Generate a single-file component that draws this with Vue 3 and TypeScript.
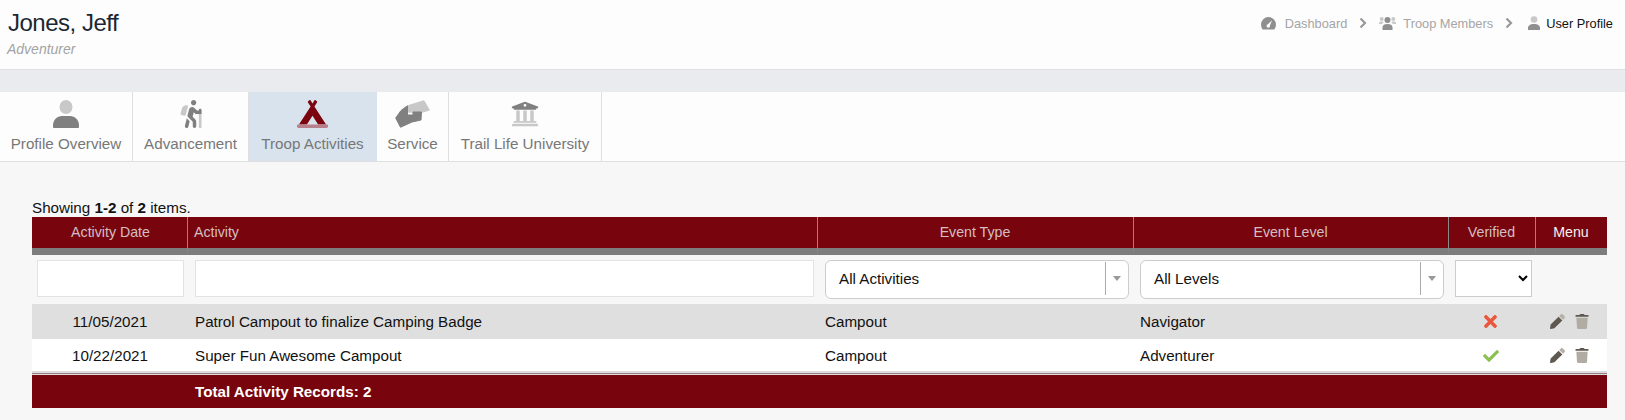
<script setup lang="ts">
interface Row {
  date: string
  activity: string
  type: string
  level: string
  verified: boolean
}
const tabs = ['Profile Overview', 'Advancement', 'Troop Activities', 'Service', 'Trail Life University']
const rows: Row[] = [
  { date: '11/05/2021', activity: 'Patrol Campout to finalize Camping Badge', type: 'Campout', level: 'Navigator', verified: false },
  { date: '10/22/2021', activity: 'Super Fun Awesome Campout', type: 'Campout', level: 'Adventurer', verified: true },
]
</script>

<template>
  <div class="page">
    <header class="top">
      <div>
        <h1 class="name">Jones, Jeff</h1>
        <div class="role">Adventurer</div>
      </div>
      <nav class="crumbs">
        <svg class="c-gauge" viewBox="0 0 16 14"><path fill="#8f8f8f" d="M8 0a8 8 0 0 0-8 8c0 2 .6 3.900 1.700 5.400h12.600A8 8 0 0 0 16 8a8 8 0 0 0-8-8z"/><path fill="#fdfdfd" d="M11.900 3.600 7.300 7.900a1.800 1.800 0 1 0 2.200 1.300z"/></svg>
        <span class="c-muted">Dashboard</span>
        <svg class="c-chev" viewBox="0 0 8 12"><path fill="none" stroke="#999" stroke-width="2.200" d="M1.500 1.500 6 6l-4.500 4.500"/></svg>
        <svg class="c-users" viewBox="0 0 17 14"><circle cx="8.500" cy="4" r="3" fill="#8f8f8f"/><path fill="#8f8f8f" d="M3.500 14v-2.500C3.500 9 5.500 8 8.500 8s5 1 5 3.500V14z"/><circle cx="2.700" cy="3" r="2" fill="#c8c8c8"/><circle cx="14.300" cy="3" r="2" fill="#c8c8c8"/><path fill="#c8c8c8" d="M0 8V7c0-1 1-1.500 2.700-1.500 1 0 1.500.2 2.100.5L3 8zM17 8V7c0-1-1-1.500-2.700-1.500-1 0-1.500.2-2.100.5L14 8z"/></svg>
        <span class="c-muted">Troop Members</span>
        <svg class="c-chev c-chev2" viewBox="0 0 8 12"><path fill="none" stroke="#999" stroke-width="2.200" d="M1.500 1.500 6 6l-4.500 4.500"/></svg>
        <svg class="c-user" viewBox="0 0 12 14"><circle cx="6" cy="3.500" r="3.300" fill="#c8c8c8"/><path fill="#8f8f8f" d="M0 14v-2c0-2.500 2.500-4 6-4s6 1.500 6 4v2z"/></svg>
        <span class="c-here">User Profile</span>
      </nav>
    </header>

    <div class="band"></div>

    <div class="tabs">
      <div v-for="(t, i) in tabs" :key="t" class="tab" :class="{ active: i === 2 }">
        <svg v-if="i === 0" class="ico" viewBox="0 0 26 28"><ellipse cx="13" cy="7" rx="6.500" ry="7" fill="#c8c8c8"/><path fill="#808080" d="M1 28c-.5 0-1-.5-1-1v-1.500C0 20 4 16 9 16h8c5 0 9 4 9 9.500V27c0 .5-.5 1-1 1z"/></svg>
        <svg v-else-if="i === 1" class="ico" viewBox="0 0 384 512"><path fill="#c8c8c8" d="M95.840 276.110 137 117c2.190-8.420-3.140-16.950-11.920-19.060-43.880-10.520-88.350 15.070-99.320 57.170L.49 253.240c-2.190 8.420 3.140 16.950 11.920 19.060l63.560 15.250c8.790 2.100 17.680-3.020 19.870-11.440zM336 192v304c0 8.840 7.160 16 16 16h16c8.840 0 16-7.160 16-16V192z"/><path fill="#808080" d="M80.950 472.230c-4.280 17.160 6.140 34.530 23.280 38.810 2.610.66 5.220.97 7.800.97 14.330 0 27.370-9.700 31.020-24.230l25.240-100.970-52.780-52.780-34.560 138.200zM368 160h-16c-8.840 0-16 7.160-16 16v16h-34.750l-46.780-46.780C243.380 134.110 228.610 128 212.910 128c-27.020 0-50.470 18.300-57.030 44.520l-26.920 107.720a32.012 32.012 0 0 0 8.420 30.390L224 397.250V480c0 17.670 14.330 32 32 32s32-14.330 32-32v-82.750c0-17.090-6.660-33.160-18.750-45.250l-46.820-46.820c.15-.5.49-.89.62-1.410l19.890-79.570 22.430 22.430c6 6 14.140 9.380 22.620 9.380H384v-80c0-8.840-7.160-16-16-16zM240 96c26.510 0 48-21.490 48-48S266.510 0 240 0s-48 21.490-48 48 21.490 48 48 48z"/></svg>
        <svg v-else-if="i === 2" class="ico" viewBox="0 0 640 512" preserveAspectRatio="none"><path fill="#7a050e" d="M599.320 448 359.540 117.750l53.410-73.550c5.190-7.150 3.610-17.160-3.540-22.350l-25.900-18.790c-7.150-5.190-17.150-3.610-22.350 3.550L320 63.300 278.830 6.600c-5.190-7.150-15.200-8.740-22.350-3.550l-25.880 18.800c-7.150 5.190-8.740 15.200-3.540 22.350l53.410 73.550L40.680 448h162.960L320 288l116.360 160z"/><path fill="#b7808a" d="M16 448h608c8.840 0 16 7.160 16 16v16c0 17.700-14.300 32-32 32H32c-17.700 0-32-14.300-32-32v-16c0-8.840 7.160-16 16-16z"/></svg>
        <svg v-else-if="i === 3" class="ico ico-hand" viewBox="0 0 35 28"><path fill="#c8c8c8" stroke="#c8c8c8" stroke-linejoin="round" d="M13.500 5.500 29 .7l5.300 9.500-7.300 2H13.500z"/><path fill="#808080" stroke="#808080" stroke-linejoin="round" d="M.7 18 6 10.500l6.500-4.800V15H18v-3h8.500L26 20l-9 2-11.500 5.300z"/></svg>
        <svg v-else class="ico" viewBox="0 0 512 512"><path fill="#808080" fill-rule="evenodd" d="M496 128v16a8 8 0 0 1-8 8h-24v12c0 6.627-5.373 12-12 12H60c-6.627 0-12-5.373-12-12v-12H24a8 8 0 0 1-8-8v-16a8 8 0 0 1 4.941-7.392l232-88a7.996 7.996 0 0 1 6.118 0l232 88A8 8 0 0 1 496 128zM256 72a26 26 0 1 0 0 52 26 26 0 0 0 0-52z"/><path fill="#c8c8c8" d="M472 432H40c-13.255 0-24 10.745-24 24v16a8 8 0 0 0 8 8h464a8 8 0 0 0 8-8v-16c0-13.255-10.745-24-24-24zM96 192v192H60c-6.627 0-12 5.373-12 12v20h416v-20c0-6.627-5.373-12-12-12h-36V192h-64v192h-64V192h-64v192h-64V192H96z"/></svg>
        <span class="tab-label">{{ t }}</span>
      </div>
    </div>

    <main class="content">
      <div class="summary">Showing <b>1-2</b> of <b>2</b> items.</div>
      <table class="grid">
        <colgroup>
          <col class="c1" /><col class="c2" /><col class="c3" /><col class="c4" /><col class="c5" /><col class="c6" />
        </colgroup>
        <thead>
          <tr class="head">
            <th class="center date-head">Activity Date</th>
            <th>Activity</th>
            <th class="center">Event Type</th>
            <th class="center">Event Level</th>
            <th class="center">Verified</th>
            <th class="center menu">Menu</th>
          </tr>
          <tr class="filters">
            <td><input class="field" type="text" /></td>
            <td><input class="field" type="text" /></td>
            <td>
              <div class="combo"><span class="combo-text">All Activities</span><span class="combo-btn"><i class="caret"></i></span></div>
            </td>
            <td>
              <div class="combo combo-level"><span class="combo-text">All Levels</span><span class="combo-btn"><i class="caret"></i></span></div>
            </td>
            <td><select class="pick"><option></option></select></td>
            <td></td>
          </tr>
        </thead>
        <tbody>
          <tr v-for="(r, i) in rows" :key="r.date" class="row" :class="i % 2 === 0 ? 'odd' : 'even'">
            <td class="center">{{ r.date }}</td>
            <td>{{ r.activity }}</td>
            <td>{{ r.type }}</td>
            <td class="level">{{ r.level }}</td>
            <td class="center flag-cell">
              <svg v-if="r.verified" class="flag check" viewBox="0 0 512 512"><path fill="#8cc152" d="M173.898 439.404l-166.400-166.400c-9.997-9.997-9.997-26.206 0-36.204l36.203-36.204c9.997-9.998 26.207-9.998 36.204 0L192 312.690 432.095 72.596c9.997-9.997 26.207-9.997 36.204 0l36.203 36.204c9.997 9.997 9.997 26.206 0 36.204l-294.400 294.401c-9.998 9.997-26.207 9.997-36.204-.001z"/></svg>
              <svg v-else class="flag" viewBox="0 0 352 512"><path fill="#e9573f" d="M242.720 256l100.070-100.070c12.280-12.280 12.280-32.190 0-44.480l-22.240-22.240c-12.280-12.280-32.190-12.280-44.480 0L176 189.280 75.930 89.210c-12.280-12.280-32.190-12.280-44.480 0L9.210 111.450c-12.280 12.280-12.280 32.190 0 44.480L109.280 256 9.210 356.070c-12.280 12.280-12.280 32.190 0 44.480l22.240 22.240c12.280 12.280 32.200 12.280 44.480 0L176 322.720l100.070 100.070c12.280 12.280 32.200 12.280 44.480 0l22.240-22.240c12.280-12.280 12.280-32.190 0-44.480L242.720 256z"/></svg>
            </td>
            <td class="actions">
              <svg class="act" viewBox="0 0 512 512"><path fill="#b5b0a8" d="M497.900 142.100l-46.100 46.100c-4.700 4.700-12.300 4.700-17 0l-111-111c-4.700-4.700-4.700-12.300 0-17l46.100-46.100c18.700-18.700 49.100-18.700 67.900 0l60.100 60.100c18.800 18.700 18.800 49.100 0 67.900z"/><path fill="#5f5850" d="M284.200 99.800 21.600 362.400.4 483.900c-2.900 16.400 11.400 30.600 27.800 27.800l121.500-21.300 262.600-262.600c4.700-4.700 4.700-12.300 0-17l-111-111c-4.800-4.700-12.400-4.700-17.100 0z"/></svg>
              <svg class="act trash" viewBox="0 0 448 512"><path fill="#5f5850" d="M432 32H312l-9.400-18.700A24 24 0 0 0 281.100 0H166.800a23.720 23.720 0 0 0-21.400 13.300L136 32H16A16 16 0 0 0 0 48v32a16 16 0 0 0 16 16h416a16 16 0 0 0 16-16V48a16 16 0 0 0-16-16z"/><path fill="#b0aca4" d="M53.200 467a48 48 0 0 0 47.900 45h245.800a48 48 0 0 0 47.900-45L416 128H32z"/></svg>
            </td>
          </tr>
        </tbody>
        <tfoot>
          <tr class="rule"><td colspan="6"></td></tr>
          <tr class="foot">
            <td></td>
            <td colspan="5">Total Activity Records: 2</td>
          </tr>
        </tfoot>
      </table>
    </main>
  </div>
</template>

<style>
html, body { margin: 0; background: #f7f7f7; }
</style>

<style scoped>
.page { font-family: "Liberation Sans", Arial, sans-serif; color: #111; height: 420px; overflow: hidden; background: #f7f7f7; }

.top { height: 69px; display: flex; justify-content: space-between; background: #fdfdfd; border-bottom: 1px solid #dfdfdf; padding: 0 12px 0 8px; }
.name { margin: 9px 0 0; font-size: 24px; line-height: 27px; font-weight: 400; letter-spacing: -0.5px; color: #1c2733; }
.role { margin-top: 6px; font-size: 14px; line-height: 15px; font-style: italic; color: #a3a3a3; margin-left: -1px; }

.crumbs { display: flex; align-items: center; height: 46px; font-size: 12.800px; }
.c-gauge { width: 15px; height: 13px; margin-right: 9px; }
.c-muted { color: #a5a5a5; }
.c-chev { width: 8px; height: 12px; margin: 0 12px 0 12px; }
.c-chev2 { margin: 0 15px 0 12px; }
.c-users { width: 17px; height: 14px; margin-right: 7px; }
.c-user { width: 12px; height: 14px; margin-right: 6px; }
.c-here { color: #111; }

.band { height: 22px; background: #e9ebef; }

.tabs { display: flex; height: 69px; background: #fdfdfd; border-bottom: 1px solid #dfdfdf; }
.tab { display: flex; flex-direction: column; align-items: center; padding-top: 8px; border-right: 1px solid #dfdfdf; box-sizing: border-box; }
.tab:nth-child(1) { width: 133px; }
.tab:nth-child(2) { width: 116px; }
.tab:nth-child(3) { width: 128px; }
.tab:nth-child(4) { width: 72px; }
.tab:nth-child(5) { width: 153px; }
.tab.active { background: #d9e3ed; border-right-color: #d9e3ed; }
.ico { height: 28px; width: 28px; display: block; }
.tab.active .ico { width: 31px; }
.ico-hand { width: 35px; }
.tab-label { margin-top: 7px; font-size: 15.200px; line-height: 17px; color: #777; white-space: nowrap; }

.content { padding: 37px 18px 0 32px; }
.summary { font-size: 15.200px; line-height: 18px; height: 18px; color: #111; }

.grid { width: 1575px; table-layout: fixed; border-collapse: separate; border-spacing: 0; font-size: 15.200px; }
.c1 { width: 156px; }
.c2 { width: 630px; }
.c3 { width: 316px; }
.c4 { width: 315px; }
.c5 { width: 87px; }
.c6 { width: 71px; }
.center { text-align: center; }

.head th { box-sizing: border-box; padding: 0 7px 1px 6px; background: #78050d; border-bottom: 7px solid #7d7d7d; height: 38px; border-right: 1px solid #8a8a8a; font-size: 14.200px; font-weight: 400; color: #d3bfc3; text-align: left; }
.head th.center { text-align: center; }
.head th.date-head { padding: 0 5px 1px 7px; }
.head th:last-child { border-right: 0; }
.head th.menu { color: #f5f0f0; }

.filters td { height: 49px; padding: 0; box-sizing: border-box; vertical-align: top; }
.field { display: block; margin: 5px 4px 0 5px; width: calc(100% - 9px); height: 37px; box-sizing: border-box; background: #fff; border: 1px solid #e3e3e3; outline: 0; }
.filters td:nth-child(2) .field { margin-left: 7px; width: calc(100% - 11px); }
.combo { display: flex; margin: 5px 5px 0 7px; height: 39px; box-sizing: border-box; background: #fff; border: 1px solid #ccc; border-radius: 6px; align-items: stretch; font-size: 15.200px; }
.combo-level { margin-left: 6px; }
.combo-text { flex: 1; padding-left: 13px; line-height: 35px; color: #111; }
.combo-btn { width: 22px; margin: 1px 0 3px; border-left: 1px solid #aaa; display: flex; align-items: center; justify-content: center; }
.caret { width: 0; height: 0; border-left: 4px solid transparent; border-right: 4px solid transparent; border-top: 5px solid #999; }
.pick { display: block; margin: 5px 0 0 6px; width: 77px; height: 37px; box-sizing: border-box; background: #fff; border: 1px solid #ccc; border-radius: 0; }

.row td { padding: 0 7px; box-sizing: border-box; white-space: nowrap; }
.row td.level { padding-left: 6px; }
.row.odd td { height: 35px; background: #dfdfdf; }
.row.even td { height: 32px; background: #fff; }
.row td.flag-cell { padding: 0 4px 0 0; }
.flag { width: 13px; height: 19px; display: inline-block; vertical-align: middle; }
.check { width: 16px; height: 16px; }
.row td.actions { font-size: 0; padding-left: 14px; }
.act { width: 15px; height: 15px; vertical-align: middle; }
.trash { width: 14px; margin-left: 10px; }

.rule td { height: 4px; padding: 0; font-size: 0; line-height: 0; box-sizing: border-box; background: #9a7f82; border-top: 2px solid #ddd; border-bottom: 1px solid #ddd; }
.foot td { height: 33px; padding: 0 7px; background: #78050d; color: #fff; font-size: 15.200px; font-weight: 700; }
</style>
